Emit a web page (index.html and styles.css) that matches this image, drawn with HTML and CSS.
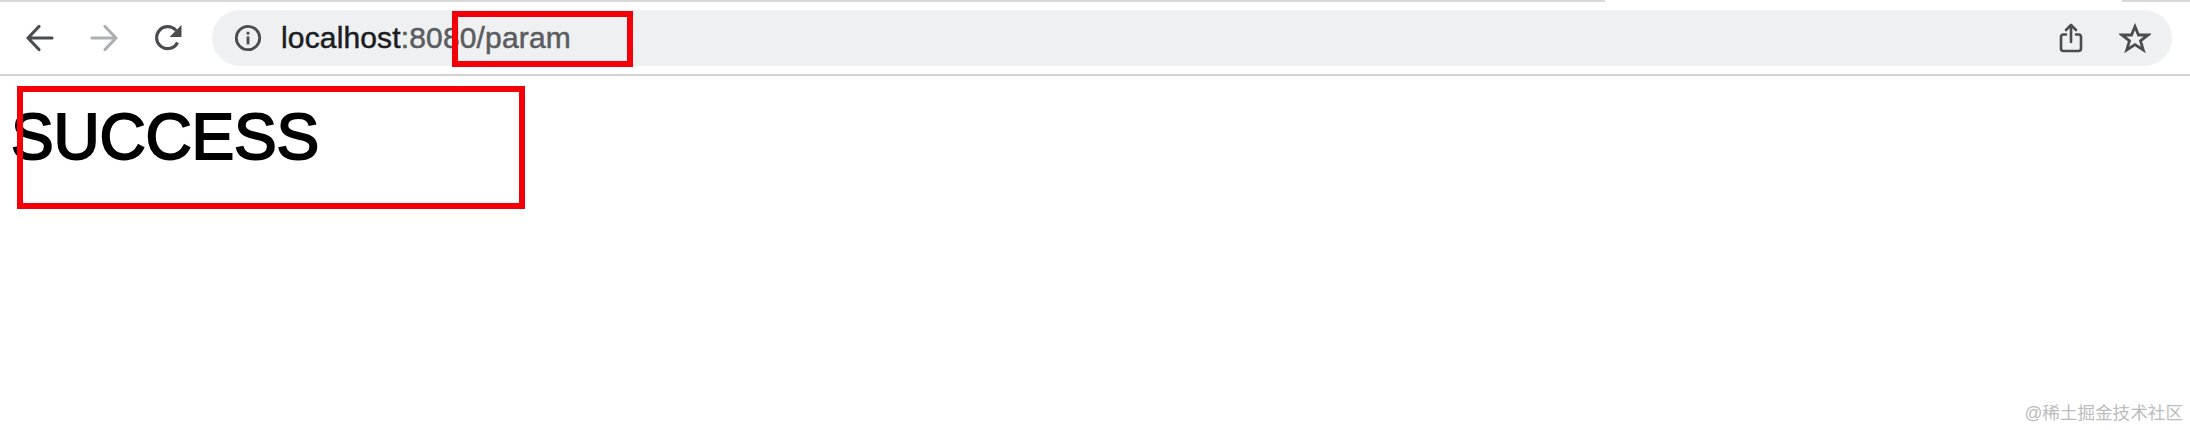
FILE: index.html
```html
<!DOCTYPE html>
<html lang="en">
  <head>
    <meta charset="UTF-8" />
    <title>localhost:8080/param</title>
    <link rel="stylesheet" href="styles.css">
  </head>
  <body>
    <div class="tab-edge">
      <div class="tab-edge-left"></div>
      <div class="tab-edge-right"></div>
    </div>
    <div class="toolbar">
      <div class="nav-btn">
        <svg width="30" height="30" viewBox="0 0 30 30" fill="none" stroke="#4a4c50" stroke-width="3.2" stroke-linecap="round" stroke-linejoin="round">
          <path d="M3 15H27M14 3.500L3 15L14 26.500" />
        </svg>
      </div>
      <div class="nav-btn">
        <svg width="30" height="30" viewBox="0 0 30 30" fill="none" stroke="#aeafb1" stroke-width="3.2" stroke-linecap="round" stroke-linejoin="round">
          <path d="M3 15H27M16 3.500L27 15L16 26.500" />
        </svg>
      </div>
      <div class="nav-btn">
        <svg width="30" height="30" viewBox="0 0 30 30" fill="none">
          <path d="M24.500 19.500A11 11 0 1 1 23 7.500" stroke="#4a4c50" stroke-width="3.200" stroke-linecap="butt" />
          <path d="M28.500 2V14H16.500Z" fill="#4a4c50" />
        </svg>
      </div>
      <div class="omnibox">
        <svg class="info-icon" width="28" height="28" viewBox="0 0 28 28" fill="none">
          <circle cx="14" cy="14" r="11.700" stroke="#4a4c50" stroke-width="2.800" />
          <rect x="12.600" y="12.400" width="2.800" height="8" fill="#4a4c50" />
          <rect x="12.600" y="7.800" width="2.800" height="2.800" fill="#4a4c50" />
        </svg>
        <div class="url"><span class="url-host">localhost</span>:8080/param</div>
        <div class="omnibox-actions">
          <svg width="24" height="30" viewBox="0 0 24 30" fill="none" stroke="#4a4c50" stroke-width="2.600" stroke-linejoin="round" stroke-linecap="round">
            <path d="M7 11.500H4.500A2.500 2.500 0 0 0 2 14V25.500A2.500 2.500 0 0 0 4.500 28H19.500A2.500 2.500 0 0 0 22 25.500V14A2.500 2.500 0 0 0 19.500 11.500H17" />
            <path d="M12 19V2.500M7 7L12 2L17 7" />
          </svg>
          <svg width="32" height="30" viewBox="0 0 32 30" fill="none" stroke="#4a4c50" stroke-width="2.800" stroke-linejoin="miter">
            <path d="M16 3.500L19.500 12H29L21.500 17.800L24.300 27L16 21.600L7.700 27L10.500 17.800L3 12H12.500Z" />
          </svg>
        </div>
      </div>
    </div>
    <div class="content">SUCCESS</div>
    <div class="mark mark-url"></div>
    <div class="mark mark-body"></div>
    <div class="watermark">@稀土掘金技术社区</div>
  </body>
</html>
```

FILE: styles.css
```css
html, body {
  margin: 0;
  height: 100%;
  background: #ffffff;
  overflow: hidden;
}
body {
  position: relative;
  font-family: "Liberation Sans", Arial, sans-serif;
}
.tab-edge {
  display: flex;
  justify-content: space-between;
  height: 2px;
}
.tab-edge-left {
  width: 1605px;
  background: #d9d9d9;
}
.tab-edge-right {
  width: 68px;
  background: #d9d9d9;
}
.toolbar {
  display: flex;
  align-items: center;
  height: 72px;
  padding-left: 8px;
  padding-right: 18px;
  border-bottom: 2px solid #d2d2d2;
}
.nav-btn {
  display: flex;
  align-items: center;
  justify-content: center;
  width: 64px;
  height: 30px;
  flex: none;
}
.omnibox {
  display: flex;
  align-items: center;
  flex: 1;
  height: 56px;
  margin-left: 12px;
  padding-left: 22px;
  padding-right: 21px;
  background: #eef0f2;
  border-radius: 28px;
}
.info-icon {
  flex: none;
}
.url {
  margin-left: 19px;
  font-size: 30px;
  letter-spacing: 0.15px;
  color: #5a5c60;
  -webkit-text-stroke: 0.5px;
}
.url-host {
  color: #1c1d1f;
}
.omnibox-actions {
  display: flex;
  align-items: center;
  gap: 36px;
  margin-left: auto;
}
.content {
  padding-left: 11px;
  padding-top: 22px;
  font-size: 64px;
  line-height: 78px;
  letter-spacing: -0.2px;
  color: #000000;
  -webkit-text-stroke: 2px;
}
.mark {
  position: absolute;
  box-sizing: border-box;
  border: 6px solid #f40009;
}
.mark-url {
  left: 452px;
  top: 11px;
  width: 181px;
  height: 56px;
}
.mark-body {
  left: 17px;
  top: 86px;
  width: 508px;
  height: 123px;
}
.watermark {
  position: absolute;
  right: 7px;
  bottom: 5px;
  font-family: "Liberation Sans", "Noto Sans CJK SC", sans-serif;
  font-size: 17.6px;
  line-height: 24px;
  color: #bcbcbc;
}
```
